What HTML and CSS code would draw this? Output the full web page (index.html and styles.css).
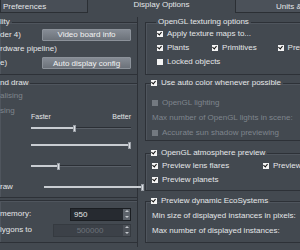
FILE: index.html
```html
<!DOCTYPE html>
<html lang="en">
<head>
    <meta charset="UTF-8">
    <title>Display Options</title>
    <link rel="stylesheet" href="styles.css">
</head>
<body>
<div class="tabs">
    <div class="tab tab-left">Preferences</div>
    <div class="tab tab-on">Display Options</div>
    <div class="tab tab-right">Units &amp; Coordinates</div>
</div>
<div class="main">
    <div class="left">
        <fieldset class="grp g-quality">
            <legend>lity</legend>
            <div class="row"><span class="lbl">der 4)</span><button class="btn">Video board info</button></div>
            <div class="row"><span class="lbl">rdware pipeline)</span></div>
            <div class="row"><span class="lbl">e)</span><button class="btn">Auto display config</button></div>
        </fieldset>
        <fieldset class="grp g-draw">
            <legend>nd draw</legend>
            <div class="row off first"><span class="lbl">alising</span></div>
            <div class="row off"><span class="lbl">sing</span></div>
            <div class="ends"><span>Faster</span><span>Better</span></div>
            <div class="slider s1"><div class="fill" style="width:42%"></div><div class="knob"></div><div class="rest"></div></div>
            <div class="slider s2"><div class="fill" style="width:97%"></div><div class="knob"></div></div>
            <div class="slider s3"><div class="fill" style="width:26%"></div><div class="knob"></div><div class="rest"></div></div>
            <div class="row r-raw"><span class="lbl">raw</span>
                <div class="slider inl"><div class="fill" style="width:97%"></div><div class="knob"></div></div>
            </div>
        </fieldset>
        <fieldset class="grp g-mem">
            <div class="row"><span class="lbl">memory:</span>
                <div class="spin"><span class="val">950</span><span class="arrows"><i class="up"></i><i class="dn"></i></span></div>
            </div>
            <div class="row"><span class="lbl">lygons to</span>
                <div class="spin spin-off"><span class="val">500000</span><span class="arrows"><i class="up"></i><i class="dn"></i></span></div>
            </div>
        </fieldset>
    </div>

    <div class="right">
        <fieldset class="grp g-tex">
            <legend>OpenGL texturing options</legend>
            <div class="row"><span class="cb on"></span>Apply texture maps to...</div>
            <div class="row cols">
                <span class="col c1"><span class="cb on"></span>Plants</span>
                <span class="col c2"><span class="cb on"></span>Primitives</span>
                <span class="col c3"><span class="cb on"></span>Previews</span>
            </div>
            <div class="row"><span class="cb"></span>Locked objects</div>
        </fieldset>
        <fieldset class="grp g-light">
            <legend><span class="cb on"></span>Use auto color whenever possible</legend>
            <div class="row off"><span class="cb dis"></span>OpenGL lighting</div>
            <div class="row off">Max number of OpenGL lights in scene:</div>
            <div class="row off"><span class="cb dis"></span>Accurate sun shadow previewing</div>
        </fieldset>
        <fieldset class="grp g-atmo">
            <legend><span class="cb on"></span>OpenGL atmosphere preview</legend>
            <div class="row cols">
                <span class="col c1"><span class="cb on"></span>Preview lens flares</span>
                <span class="col c4"><span class="cb on"></span>Preview clouds</span>
            </div>
            <div class="row"><span class="cb on"></span>Preview planets</div>
        </fieldset>
        <fieldset class="grp g-eco">
            <legend><span class="cb on"></span>Preview dynamic EcoSystems</legend>
            <div class="row">Min size of displayed instances in pixels:</div>
            <div class="row">Max number of displayed instances:</div>
        </fieldset>
    </div>
</div>
</body>
</html>
```

FILE: styles.css
```css
*{
    margin:0;
    padding:0;
    box-sizing:border-box;
}
body{
    width:300px;
    height:250px;
    overflow:hidden;
    background:#434950;
    color:#e4e6e8;
    font:8px/1 "Liberation Sans", Arial, sans-serif;
}
.tabs{
    display:flex;
    height:14px;
    white-space:nowrap;
}
.tab{
    height:13px;
    line-height:13px;
}
.tab-left{
    width:88px;
    flex:none;
    padding-left:2px;
    background:#484e56;
    border:1px solid #2b2f34;
    border-top:0;
}
.tab-on{
    flex:1;
    text-align:center;
    line-height:10px;
}
.tab-right{
    width:120px;
    flex:none;
    margin-right:-55px;
    padding-left:40px;
    background:#4b5159;
    border:1px solid #2b2f34;
    border-top:0;
}
.main{
    display:flex;
    gap:7px;
    padding-top:3px;
}
.left{
    width:138px;
    flex:none;
    border-right:1px solid #2d3137;
    height:230px;
}
.right{
    width:175px;
    flex:none;
}
.grp{
    border:1px solid #2d3137;
    box-shadow:inset 1px 1px 0 #4f555d;
    min-width:0;
}
.grp legend{
    padding:0 2px;
    line-height:10px;
    white-space:nowrap;
}
.left .grp{
    border-left:0;
    border-right:0;
    padding-right:6px;
}
.left .grp legend{
    padding-left:0;
}
.row{
    display:flex;
    align-items:center;
    height:14px;
    white-space:nowrap;
}
.row .lbl{
    flex:1;
}
.off{
    color:#7f858d;
}
.btn{
    width:89px;
    height:12px;
    font:8px "Liberation Sans", Arial, sans-serif;
    color:#f2f2f2;
    background:linear-gradient(#868c95,#6c727a);
    border:1px solid #8c929a;
    border-radius:1px;
}
.g-quality legend{
    margin-bottom:-3px;
}
.g-quality{
    padding-top:3px;
    padding-bottom:4px;
}
.g-quality .row:first-of-type{
    height:15px;
}
.g-draw{
    margin-top:3px;
    padding-bottom:3px;
}
.g-draw legend{
    margin-bottom:2px;
}
.g-draw .row.off{
    height:15px;
}
.g-draw .first{
    margin-top:-2px;
}
.ends{
    display:flex;
    justify-content:space-between;
    margin:-5px 0 0 31px;
    height:8px;
    line-height:8px;
    font-size:7px;
}
.slider{
    display:flex;
    align-items:center;
    margin-left:31px;
    height:8px;
}
.slider .fill{
    height:2px;
    background:#c9cdd2;
}
.slider .rest{
    flex:1;
    height:2px;
    background:#2b2f35;
    border-bottom:1px solid #5a6068;
}
.slider .knob{
    width:3px;
    height:7px;
    flex:none;
    background:#dde0e4;
    border:1px solid #9a9fa6;
}
.s1{
    margin-top:3px;
}
.s2{
    margin-top:9px;
}
.s3{
    margin-top:13px;
}
.r-raw{
    margin-top:10px;
}
.slider.inl{
    flex:none;
    width:100px;
}
.g-mem{
    margin-top:2px;
    padding-top:5px;
    padding-bottom:4px;
}
.g-mem .row{
    height:16px;
}
.spin{
    display:flex;
    width:61px;
    height:13px;
    background:#262a30;
    border:1px solid #1b1e22;
}
.spin-off{
    width:78px;
    background:#3c4148;
    border-color:#353a40;
    color:#6c727a;
}
.spin .val{
    flex:1;
    padding-left:3px;
    line-height:11px;
}
.spin-off .val{
    text-align:center;
}
.arrows{
    width:7px;
    display:flex;
    flex-direction:column;
    justify-content:space-around;
    align-items:center;
    background:#5d636b;
}
.arrows i{
    width:0;
    height:0;
    border-left:2px solid transparent;
    border-right:2px solid transparent;
}
.arrows .up{
    border-bottom:2px solid #c3c7cc;
}
.arrows .dn{
    border-top:2px solid #c3c7cc;
}
.spin-off .arrows{
    background:#4c5158;
}
.right .grp{
    border-right:0;
    padding-left:6px;
}
.right .grp legend{
    margin-left:-1px;
}
.g-tex{
    padding-left:11px !important;
    padding-bottom:5px;
}
.g-light legend, .g-atmo legend, .g-eco legend{
    display:flex;
    align-items:center;
    padding:0 2px 0 0;
    margin-left:1px;
}
.g-light{
    margin-top:3px;
    padding-top:7px;
}
.g-light .row{
    height:15px;
}
.g-atmo{
    margin-top:7px;
    padding-top:1px;
    padding-bottom:3px;
}
.g-eco{
    margin-top:5px;
    padding-top:2px;
    padding-bottom:4px;
}
.g-eco .row{
    height:15px;
}
.cols .col{
    display:flex;
    align-items:center;
}
.c1{ width:58px; }
.c2{ width:69px; }
.c4{ margin-left:53px; }
.cb{
    display:inline-block;
    width:6px;
    height:6px;
    margin-right:4px;
    background:#f4f4f4;
    flex:none;
    position:relative;
}
.cb.on::after{
    content:"";
    position:absolute;
    left:1px;
    top:0;
    width:2px;
    height:3px;
    border:solid #111;
    border-width:0 1.5px 1.5px 0;
    transform:rotate(40deg);
}
.cb.dis{
    background:#737980;
}
```
